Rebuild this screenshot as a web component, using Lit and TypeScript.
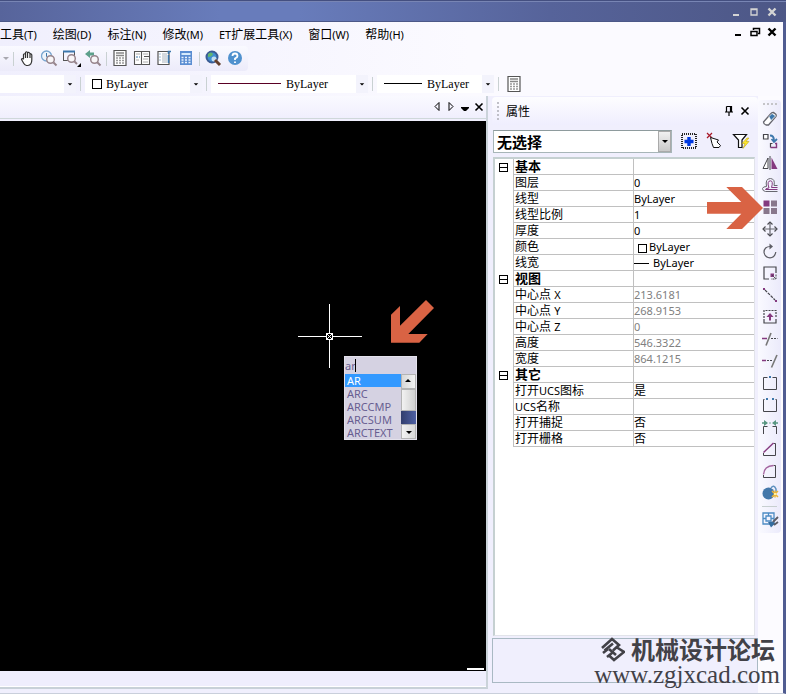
import { LitElement, html, svg, css } from "lit";
import { customElement } from "lit/decorators.js";

// Latin runs are set one pixel smaller than the Chinese text around them.
const mixed = (text: string) =>
  text
    .split(/([\x21-\x7e]+)/)
    .filter(Boolean)
    .map((part) => (/^[\x21-\x7e]/.test(part) ? html`<span class="latin">${part}</span>` : part));

const K = "#45454b";
const P = "#84397f";
const B = "#3c77ac";
const G = "#579681";

const icons: Record<string, unknown> = {
  hand: svg`<path d="M4.500 9V4.500q1-1.500 2 0V8M6.500 8V2.500q1-1.500 2 0V8M8.500 3q1-1.500 2.500.500V8M11 4q1.500-.500 1.800 1V10q0 5-4 5.500H7.500Q5.500 15 4.500 13L2.500 9.500Q3 7.500 4.500 9.500" fill="#fff" stroke="#333" stroke-width="1.200"/>`,
  zoomTime: svg`<circle cx="5.500" cy="6" r="5" fill="#eef4fb" stroke="#78a5cf" stroke-width="1.300"/><path d="M5.500 3v3.500L8 8" fill="none" stroke="${B}"/><circle cx="9.500" cy="9.500" r="3.800" fill="#f8f6f8" stroke="#97858c" stroke-width="1.500"/><path d="M12.500 12.500L15.500 15.500" stroke="#97858c" stroke-width="2"/>`,
  zoomWin: svg`<path d="M.5 11V2M0 10.500h5M11.500 2v4" fill="none" stroke="#555"/><path d="M0 1.500h12" stroke="${B}" stroke-width="2"/><circle cx="8.500" cy="8.500" r="3.800" fill="#f8f6f8" stroke="#97858c" stroke-width="1.500"/><path d="M11 11L14 14" stroke="#97858c" stroke-width="2"/><path d="M18 13v4h-4z" fill="#000"/>`,
  zoomPrev: svg`<path d="M0 4L5 0v2.500h4v3H5V8z" fill="#5da08b"/><circle cx="9.500" cy="9.500" r="3.800" fill="#f8f6f8" stroke="#97858c" stroke-width="1.500"/><path d="M12 12L15.500 15.500" stroke="#97858c" stroke-width="2"/>`,
  calc: svg`<path d="M2 .5h12v15H2z" fill="#fff" stroke="#555" stroke-width="1.200"/><path d="M4 3h8M4 5.500h8" stroke="#888" stroke-width="1.600"/><path d="M4 8h8M4 10.500h8M4 13h8" stroke="#999" stroke-width="1.400" stroke-dasharray="2 1"/>`,
  palettes: svg`<path d="M.5 1.500h15v13H.500zM7.500 1.500v13M10 6.500h5" fill="#fff" stroke="#555" stroke-width="1.100"/><path d="M2 4h4M9 4h5M2 10h3M9 9h5M9 12h5" stroke="#aaa"/><path d="M2 7h4" stroke="${B}" stroke-dasharray="2 1"/>`,
  sheet: svg`<path d="M2 1.500h11v13H2z" fill="#fff" stroke="#555" stroke-width="1.200"/><path d="M12.500 4V1.500H15M12.500 5v8" stroke="${B}" stroke-width="1.600" fill="none"/><path d="M3.500 4h1M3.500 7h1M3.500 10h1" stroke="${B}"/><path d="M6 4h5M6 6h5M6 8h5M6 10h5M6 12h5" stroke="#aab4be"/>`,
  blueCalc: svg`<path d="M2 1h12v14H2z" fill="#5b8ed2"/><path d="M3.500 3h9v2h-9z" fill="#d6ebfc"/><path d="M3.500 7.500h9M3.500 10h9M3.500 12.500h9" stroke="#eaf4ff" stroke-width="1.500" stroke-dasharray="2 1.500"/>`,
  globe: svg`<circle cx="7" cy="7" r="5.500" fill="#3f8fd0" stroke="#3b5b93" stroke-width="2"/><path d="M3 4q3-3 5 0q-1 3-5 3z" fill="#62b46f"/><circle cx="9" cy="9" r="2.500" fill="#c4def2"/><path d="M10 10l5 5" stroke="#633f2c" stroke-width="3"/>`,
  help: svg`<circle cx="8" cy="8" r="7" fill="#4f91ce"/><path d="M5.500 6q0-2.500 2.500-2.500T10.500 6Q10.500 7.500 8 8.500V10M8 11.500v1.500" fill="none" stroke="#fff" stroke-width="1.800"/>`,
  down: svg`<path d="M5 7h6L8 10z" fill="#000"/>`,
  eraser: svg`<path d="M1.500 11L9 2.500q1-1 2.500-1l2.500 2q.5 1 0 2L6.500 14H4q-2.500-1-2.500-3z" fill="#fff" stroke="#66666e" stroke-width="1.300"/><path d="M7 5.500L10 2.500l3.500 2.500L9 9.500z" fill="${B}" stroke="#fff" stroke-width=".600"/>`,
  copy: svg`<path d="M1.500 1.500h4.500v4.500H1.500z" fill="#fff" stroke="${K}" stroke-width="1.200"/><path d="M8 2.500q4 0 4 5M9.500 6l2.500 3 3-3" fill="none" stroke="${B}" stroke-width="1.800"/><path d="M10.500 10.500h-2v4" fill="none" stroke="${K}" stroke-width="1.200"/><path d="M8.500 14.500h6v-4h-1.500" fill="none" stroke="${P}" stroke-width="1.400"/>`,
  mirror: svg`<path d="M6 3v10.500H1z" fill="#fff" stroke="${K}"/><path d="M9.500 2.500V14H15.500z" fill="${P}"/><path d="M8 1v14" stroke="${K}"/>`,
  offset: svg`<path d="M15.500 14.500H3.500Q.5 14 .5 11.500Q1 9.500 4.500 9.500Q3 1.500 8.500 1.500Q13.500 2 12 8.500H15.500" fill="none" stroke="#66666e"/><path d="M15.500 12.500H3.500Q3 11.500 7 11Q4.500 4 8.500 3.800Q11.500 4 9.500 10.500H15.500" fill="none" stroke="${P}"/>`,
  array: svg`<path d="M1.500 1.500h6v6h-6z" fill="${P}"/><path d="M9 1.500h6v6H9zM1.500 9h6v6h-6zM9 9h6v6H9z" fill="#88778c"/>`,
  move: svg`<path d="M8 1.500v13M1.500 8h13" stroke="#66666e" stroke-width="1.200"/><path d="M5.500 3.500L8 1l2.500 2.500M5.500 12.500L8 15l2.500-2.500M3.500 5.500L1 8l2.500 2.500M12.500 5.500L15 8l-2.500 2.500" fill="none" stroke="#4b4b52" stroke-width="1.200"/>`,
  rotate: svg`<path d="M8.500 3.500Q2 3.500 2 9.500Q3 14.500 8 14.800Q13 14.500 13.800 9" fill="none" stroke="#5c5c64" stroke-width="1.200"/><path d="M7.500 .5L11 3.500L7.500 6.500z" fill="#5c5c64"/>`,
  scale: svg`<path d="M7 14H2V2h12v6" fill="none" stroke="${K}" stroke-width="1.200"/><path d="M8.500 8.500h3.500v3.500h-3.500z" fill="${P}"/><path d="M14 9.500v4.500h-5M10 10l4 4" fill="none" stroke="${K}" stroke-dasharray="2 1"/>`,
  stretch: svg`<path d="M3 3l10 10" stroke="${K}" stroke-width="1.200" stroke-dasharray="3 1"/><path d="M1 1h2v2H1zM13 13h2v2h-2z" fill="${P}"/>`,
  lengthen: svg`<path d="M2 10v4h12v-4" fill="none" stroke="${K}" stroke-width="1.200"/><path d="M2 9V1.500h12V9" fill="none" stroke="${K}" stroke-width="1.200" stroke-dasharray="2 1"/><path d="M8 4l3.500 4H9v3.500H7V8H4.500z" fill="${P}"/>`,
  trim: svg`<path d="M0 7.500h5" stroke="${P}" stroke-width="1.500"/><path d="M4 14.500L9 2" stroke="#777" stroke-width="1.600"/><path d="M9 7.500h6.500" stroke="${K}" stroke-dasharray="2 1"/>`,
  extend: svg`<path d="M0 7.500h4" stroke="${P}" stroke-width="1.500"/><path d="M5 7.500h5" stroke="${K}" stroke-dasharray="2 1"/><path d="M9.500 14.500L15 2" stroke="#777" stroke-width="1.600"/>`,
  breakPoint: svg`<path d="M5.500 2.500H1.500v12h13v-12h-4" fill="none" stroke="${K}"/><path d="M7 1h2v2H7z" fill="${B}"/>`,
  break: svg`<path d="M2.500 2.500H1.500v12h13v-12h-1" fill="none" stroke="${K}"/><path d="M4 1h2v2H4zM10 1h2v2h-2z" fill="${B}"/>`,
  join: svg`<path d="M1.500 15V7.500h4M14.500 15V7.500h-4" fill="none" stroke="${K}"/><path d="M0 4h3M16 4h-3M7.500 4h1" stroke="${G}" stroke-width="1.500"/><path d="M2 1l4 3-4 3zM14 1l-4 3 4 3z" fill="${G}"/>`,
  chamfer: svg`<path d="M1.500 12v2.500h12V2.500h-2" fill="none" stroke="${K}"/><path d="M1.500 11.500L11.500 2" stroke="${P}" stroke-width="1.400"/>`,
  fillet: svg`<path d="M1.500 12v2.500h12V2.500h-2" fill="none" stroke="${K}"/><path d="M1.500 11.500Q2 3 11.500 2.500" fill="none" stroke="#a565a0" stroke-width="1.300"/>`,
  explode: svg`<circle cx="6.500" cy="8.500" r="6" fill="#4377a9"/><path d="M9 3q3-4 5 1v3" fill="none" stroke="#5f91c0" stroke-width="1.500"/><path d="M10 6l6 6M16 6l-6 6M13 5.500v7" stroke="#efb532" stroke-width="1.500"/><path d="M12 8h2v2h-2z" fill="#fff3a0"/>`,
  paint: svg`<path d="M1 1h11v11H1zM1 6.500h3M9 6.500h3M6.500 1v3M4 4h5v5H4z" fill="none" stroke="#4c8bc4" stroke-width="1.300"/><path d="M6 10l3 5.500 4-4-2-2z" fill="#346c9f"/><path d="M11 10l5-5M12 13l4-3" stroke="#5c5c66" stroke-width="1.800"/>`,
  quickAdd: svg`<path d="M1 1h14v14H1z" fill="none" stroke="#222" stroke-width="2" stroke-dasharray="1 1"/><path d="M8 4v9M3.500 8.500h9" stroke="#0038e0" stroke-width="3.400"/>`,
  pick: svg`<path d="M0 0l5 5M5 0L0 5" stroke="#a81828" stroke-width="1.200"/><path d="M3.500 4.500l8 2.500-1.500 2 3.500 3.500-1.500 2H6.500L5 10.500z" fill="#fff" stroke="#111"/>`,
  filter: svg`<path d="M.5 1.500h13L9 7v7.500H5.500V7z" fill="#fff" stroke="#111" stroke-width="1.200"/><path d="M14 5l-5 5.500h3l-2 5 6-7h-3L16 5z" fill="#ffe82b" stroke="#b49a11" stroke-width=".500"/>`,
  tabPrev: svg`<path d="M10 3.500v8L6 7.500z" fill="none" stroke="#000"/>`,
  tabNext: svg`<path d="M6 3.500v8l4-4z" fill="none" stroke="#000"/>`,
  tabList: svg`<path d="M4 8h8v1l-3 3H7L4 9z" fill="#000"/>`,
  close: svg`<path d="M4.500 4.500l7 7M11.500 4.500l-7 7" stroke="#000" stroke-width="1.600"/>`,
  boldClose: svg`<path d="M4.500 4.500l7 7M11.500 4.500l-7 7" stroke="currentColor" stroke-width="2.400"/>`,
  minimize: svg`<path d="M5 11h6" stroke="currentColor" stroke-width="2"/>`,
  maximize: svg`<path d="M5 5h6v6H5zM5 5.500h6" fill="none" stroke="currentColor" stroke-width="1.300"/>`,
  restore: svg`<path d="M6.500 6V4.500h6v5H11M4 7.500h6v4H4zM4 7.500h6" fill="none" stroke="currentColor" stroke-width="1.500"/>`,
  pin: svg`<path d="M5.500 3.500h5v5M5.500 3.500v5M9.500 3.500v5M4 9h8M8 9v4" fill="none" stroke="#000" stroke-width="1.200"/>`,
};

const icon = (name: string) => html`<svg viewBox="0 0 16 16" aria-hidden="true">${icons[name]}</svg>`;
const button = (name: string, label: string, kind = "tool") =>
  html`<button class=${kind} aria-label=${label}>${icon(name)}</button>`;

const menus = ["工具(T)", "绘图(D)", "标注(N)", "修改(M)", "ET扩展工具(X)", "窗口(W)", "帮助(H)"];

const standardTools = [
  [["hand", "平移"], ["zoomTime", "实时缩放"], ["zoomWin", "窗口缩放"], ["zoomPrev", "上一视图"]],
  [["calc", "特性"], ["palettes", "工具选项板"], ["sheet", "设计中心"], ["blueCalc", "计算器"]],
  [["globe", "查找"], ["help", "帮助"]],
];

const modifyTools = [
  ["eraser", "删除"], ["copy", "复制"], ["mirror", "镜像"], ["offset", "偏移"], ["array", "阵列"],
  ["move", "移动"], ["rotate", "旋转"], ["scale", "缩放"], ["stretch", "拉伸"], ["lengthen", "拉长"],
  ["trim", "修剪"], ["extend", "延伸"], ["breakPoint", "打断于点"], ["break", "打断"], ["join", "合并"],
  ["chamfer", "倒角"], ["fillet", "圆角"], ["explode", "分解"],
];

type Row = { name: string; value?: string; mark?: "swatch" | "stroke"; muted?: boolean };
const groups: { title: string; rows: Row[] }[] = [
  {
    title: "基本",
    rows: [
      { name: "图层", value: "0" },
      { name: "线型", value: "ByLayer" },
      { name: "线型比例", value: "1" },
      { name: "厚度", value: "0" },
      { name: "颜色", value: "ByLayer", mark: "swatch" },
      { name: "线宽", value: "ByLayer", mark: "stroke" },
    ],
  },
  {
    title: "视图",
    rows: [
      { name: "中心点 X", value: "213.6181", muted: true },
      { name: "中心点 Y", value: "268.9153", muted: true },
      { name: "中心点 Z", value: "0", muted: true },
      { name: "高度", value: "546.3322", muted: true },
      { name: "宽度", value: "864.1215", muted: true },
    ],
  },
  {
    title: "其它",
    rows: [
      { name: "打开UCS图标", value: "是" },
      { name: "UCS名称" },
      { name: "打开捕捉", value: "否" },
      { name: "打开栅格", value: "否" },
    ],
  },
];

const base = css`
  * { box-sizing: border-box; }
  button { padding: 0; border: 0; background: none; color: inherit; font: inherit; display: flex; align-items: center; justify-content: center; flex: none; }
  button svg { width: 16px; height: 16px; overflow: visible; flex: none; }
  .latin { font-size: 11px; }
  select { appearance: none; border: 0; padding: 0; margin: 0; background: none; color: #000; min-width: 0; flex: 1; outline: 0; }
`;

@customElement("property-panel")
export class PropertyPanel extends LitElement {
  static styles = [
    base,
    css`
      :host { display: flex; flex-direction: column; flex: none; width: 266px; padding-bottom: 10px; }
      .head { display: flex; align-items: center; height: 28px; padding: 0 5px; border-radius: 4px 4px 0 0; background: linear-gradient(#fdfdff, #efeefe); flex: none; }
      .grip { width: 2px; height: 18px; margin-right: 7px; background: repeating-linear-gradient(#c0c0c8 0 2px, transparent 2px 4px); }
      h2 { flex: 1; margin: 0; font-size: 12px; font-weight: 400; }
      .small { width: 16px; height: 20px; }
      .picker { display: flex; align-items: center; height: 32px; padding-left: 1px; flex: none; }
      .combo { display: flex; width: 179px; height: 23px; border: 1px solid #a7b5b8; border-top-color: #8e9b9d; background: #fff; margin-right: 4px; }
      .combo select { font: bold 15px "Noto Sans CJK SC", sans-serif; padding-left: 3px; }
      .arrow { width: 13px; background: linear-gradient(#f1f1f1, #c9c9c9); border: 1px solid #aaa; display: flex; align-items: center; justify-content: center; }
      .arrow svg { width: 16px; height: 16px; flex: none; }
      .picker button { width: 26px; height: 22px; }
      .grid { flex: 1; margin: 0 3px 0 1px; border: 1px solid #e2e4ea; border-top: 2px solid #c5d0d1; border-left: 2px solid #c5d0d1; background: #fff; }
      table { width: 100%; table-layout: fixed; border-spacing: 0; }
      tr { height: 16px; }
      td, th { padding: 0; height: 16px; line-height: 15px; text-align: left; font-weight: 400; white-space: nowrap; border-bottom: 1px solid #c0c0c0; }
      .gutter { width: 19px; border-bottom: 0; border-right: 1px solid #c0c0c0; }
      .name { width: 120px; padding-left: 1px; border-right: 1px solid #c0c0c0; }
      .title { font-weight: 700; font-size: 13px; }
      .muted { color: #808080; }
      .toggle { width: 9px; height: 9px; margin-left: 4px; border: 1px solid #000; }
      .toggle::before { content: ""; width: 7px; height: 1px; background: #000; }
      .swatch { display: inline-block; width: 9px; height: 9px; margin: 0 2px 0 4px; border: 1px solid #000; vertical-align: -2px; }
      .stroke { display: inline-block; width: 15px; height: 1px; margin: 0 4px 0 0; background: #000; vertical-align: 3px; }
      .about { height: 45px; margin-top: 2px; border: 1px solid #a9b9c3; flex: none; }
    `,
  ];

  render() {
    return html`
      <div class="head">
        <span class="grip"></span>
        <h2>属性</h2>
        ${button("pin", "自动隐藏", "small")}${button("close", "关闭", "small")}
      </div>
      <div class="picker">
        <div class="combo">
          <select aria-label="选择对象"><option>无选择</option></select>
          <span class="arrow">${icon("down")}</span>
        </div>
        ${button("quickAdd", "添加选择")}${button("pick", "选择对象")}${button("filter", "快速选择")}
      </div>
      <div class="grid">
        <table>
          ${groups.map(
            (g) => html`<tbody>
              <tr>
                <td class="gutter"><button class="toggle" aria-label="折叠"></button></td>
                <th class="name title">${g.title}</th>
                <td></td>
              </tr>
              ${g.rows.map(
                (r) => html`<tr>
                  <td class="gutter"></td>
                  <th class="name">${mixed(r.name)}</th>
                  <td class=${r.muted ? "muted" : ""}>${r.mark ? html`<span class=${r.mark}></span>` : ""}${mixed(r.value ?? "")}</td>
                </tr>`
              )}
            </tbody>`
          )}
        </table>
      </div>
      <div class="about"></div>
    `;
  }
}

@customElement("drawing-view")
export class DrawingView extends LitElement {
  static styles = [
    base,
    css`
      :host { display: flex; flex-direction: column; flex: 1; min-width: 0; margin-bottom: 4px; border-right: 2px solid #cbd3da; border-bottom: 2px solid #c8d1d8; }
      .tabs { display: flex; justify-content: flex-end; align-items: center; height: 23px; border-bottom: 1px solid #cfd8da; background: linear-gradient(#fafaff, #f0effd); flex: none; }
      .tabs button { width: 14px; height: 22px; }
      .canvas { position: relative; flex: 1; background: #000; margin-top: 2px; overflow: hidden; }
      .foot { height: 16px; background: #efeefd; border-bottom: 1px solid #fff; flex: none; }
      .cross { position: absolute; left: 298px; top: 183px; width: 64px; height: 64px; }
      .pointer { position: absolute; left: 390px; top: 178px; width: 46px; height: 46px; }
      .edge { position: absolute; right: 2px; bottom: 1px; width: 17px; height: 2px; background: #fff; }
      .command { position: absolute; left: 344px; top: 235px; width: 73px; background: #d5d2e2; border: 1px solid #e4e2ec; font-size: 11px; color: #685e91; }
      .entry { display: flex; align-items: center; height: 17px; }
      .entry input { width: 10px; height: 15px; padding: 0; border: 0; background: none; color: inherit; font: inherit; outline: 0; }
      .caret { width: 1px; height: 13px; background: #000; }
      .choices { display: flex; }
      ul { flex: 1; min-width: 0; margin: 0; padding: 0; list-style: none; }
      li { height: 13px; line-height: 13px; padding-left: 2px; }
      .chosen { background: #3399ff; color: #fff; }
      .bar { display: flex; flex-direction: column; width: 15px; background: linear-gradient(90deg, #323e6d, #4e60a3); }
      .bar button { height: 15px; background: linear-gradient(90deg, #f2f2f2, #d8d8d8); border: 1px solid #b4b4b4; }
      .thumb { height: 22px; background: linear-gradient(90deg, #f2f2f2, #d0d0d0); border: 1px solid #b4b4b4; }
      .space { flex: 1; }
      .up { transform: rotate(180deg); }
    `,
  ];

  render() {
    const commands = ["AR", "ARC", "ARCCMP", "ARCSUM", "ARCTEXT"];
    return html`
      <div class="tabs">
        ${button("tabPrev", "上一个")}${button("tabNext", "下一个")}${button("tabList", "列表")}${button("close", "关闭")}
      </div>
      <div class="canvas">
        <svg class="cross" viewBox="0 0 64 64" shape-rendering="crispEdges">
          <path d="M0 32.500h64M31.500 0v64" stroke="#fff" />
          <path d="M28.500 29.500h6v6h-6z" fill="#000" stroke="#fff" />
          <path d="M29 30l5 5M34 30l-5 5" stroke="#fff" />
        </svg>
        <svg class="pointer" viewBox="100 9 46 46">
          <path d="M101 52.700V24.700L110 16V35.700L136 10L144 18L118.300 44H137.700L129.300 52.700z" fill="#d96344" />
        </svg>
        <div class="command">
          <div class="entry"><input aria-label="命令" .value=${"ar"} /><span class="caret"></span></div>
          <div class="choices">
            <ul role="listbox">
              ${commands.map((c, i) => html`<li role="option" class=${i === 0 ? "chosen" : ""}>${c}</li>`)}
            </ul>
            <div class="bar">
              <button class="up" aria-label="向上">${icon("down")}</button>
              <span class="thumb"></span>
              <span class="space"></span>
              <button aria-label="向下">${icon("down")}</button>
            </div>
          </div>
        </div>
        <span class="edge"></span>
      </div>
      <div class="foot"></div>
    `;
  }
}

@customElement("app-root")
export class AppRoot extends LitElement {
  static styles = [
    base,
    css`
      :host { display: flex; flex-direction: column; position: relative; min-height: 100vh; overflow: hidden; background: #f0effd; color: #000; font: 12px "Noto Sans", "Noto Sans CJK SC", sans-serif; }
      .caption { display: flex; justify-content: flex-end; align-items: center; height: 22px; padding-right: 5px; border-top: 1px solid #444f80; box-shadow: inset 0 1px #7885b4, inset 0 -1px #4c5888; background: linear-gradient(90deg, #57649b, #687cbb 28%, #687cbb 38%, #56639a 70%, #4d5786); color: #d4d4d4; flex: none; }
      .caption button { width: 18px; height: 20px; }
      .frame { flex: 1; display: flex; flex-direction: column; border-right: 3px solid #505c91; border-bottom: 1px solid #c9cfdb; background: linear-gradient(90deg, #f0effd, #fbfaff 60%); }
      .menu { display: flex; align-items: center; height: 24px; gap: 16px; flex: none; }
      .menu a { color: #000; text-decoration: none; white-space: nowrap; }
      .mdi { display: flex; margin-left: auto; padding: 0 3px 4px 0; }
      .mdi button { width: 17px; height: 16px; }
      .standard { display: flex; align-items: center; align-self: flex-start; height: 25px; padding-right: 2px; border-radius: 0 4px 4px 0; background: linear-gradient(#fafaff, #ecebfa); flex: none; }
      .standard svg { margin-bottom: 2px; }
      .tool { width: 22px; height: 22px; }
      .split { width: 1px; height: 14px; margin: 0 2px; background: #c9d1d2; flex: none; }
      .more { width: 11px; height: 22px; opacity: .3; }
      .format { display: flex; align-items: center; height: 25px; flex: none; }
      .format .split { margin: 0 4px; }
      .combo { display: flex; align-items: center; width: 117px; height: 18px; padding-left: 7px; background: #fff; flex: none; }
      .combo select { font: 12px "Liberation Serif", serif; font-weight: 400; }
      .combo svg { width: 12px; height: 18px; background: #f3f3fc; flex: none; }
      .combo svg { overflow: visible; }
      .first { width: 76px; }
      .long { width: 157px; }
      .swatch { width: 10px; height: 10px; border: 1px solid #000; margin-right: 4px; flex: none; }
      .line { width: 63px; height: 1px; background: #5a0024; margin-right: 5px; flex: none; }
      .short { width: 38px; background: #000; }
      .work { display: flex; flex: 1; background: #f0effd; }
      .panelbox { display: flex; padding: 1px 0 0 4px; }
      .side { width: 25px; background: #fcfbff; flex: none; }
      .modify { display: flex; flex-direction: column; align-items: center; margin: 4px 2px 0 0; padding: 3px 0 2px; border-radius: 4px; background: linear-gradient(90deg, #fafaff, #ebeafb); }
      .dots { width: 14px; height: 2px; margin-bottom: 3px; background: repeating-linear-gradient(90deg, #c4c4c8 0 2px, transparent 2px 4px); }
      .rule { width: 15px; height: 1px; margin: 2px 0; background: #c7cfd0; }
      .arrow { position: absolute; right: 22px; top: 186px; width: 58px; height: 44px; }
      .mark { position: absolute; right: 6px; bottom: 6px; color: #424147; display: flex; flex-direction: column; align-items: flex-end; }
      .brand { display: flex; align-items: center; height: 26px; gap: 6px; padding-right: 5px; font: bold 24px/24px "Noto Sans CJK SC", sans-serif; }
      .brand svg { width: 25px; height: 25px; }
      .site { font: 25px/26px "Liberation Serif", serif; }
    `,
  ];

  render() {
    const split = html`<span class="split"></span>`;
    return html`
      <header class="caption">
        ${button("minimize", "最小化")}${button("maximize", "最大化")}${button("boldClose", "关闭")}
      </header>
      <div class="frame">
        <nav class="menu">
          ${menus.map((m) => html`<a href="#">${mixed(m)}</a>`)}
          <div class="mdi">${button("minimize", "最小化")}${button("restore", "还原")}${button("boldClose", "关闭")}</div>
        </nav>
        <div class="standard">
          ${button("down", "更多", "more")}
          ${standardTools.map((set) => html`${split}${set.map(([n, l]) => button(n, l))}`)}
        </div>
        <div class="format">
          <div class="combo first"><select aria-label="图层"><option></option></select>${icon("down")}</div>
          ${split}
          <div class="combo"><span class="swatch"></span><select aria-label="颜色"><option>ByLayer</option></select>${icon("down")}</div>
          ${split}
          <div class="combo long"><span class="line"></span><select aria-label="线型"><option>ByLayer</option></select>${icon("down")}</div>
          ${split}
          <div class="combo"><span class="line short"></span><select aria-label="线宽"><option>ByLayer</option></select>${icon("down")}</div>
          ${split} ${button("calc", "特性")}
        </div>
        <div class="work">
          <drawing-view></drawing-view>
          <div class="panelbox"><property-panel></property-panel></div>
          <aside class="side">
            <div class="modify">
              <span class="dots"></span>
              ${modifyTools.map(([n, l]) => button(n, l))}
              <span class="rule"></span>
              ${button("paint", "格式刷")}
            </div>
          </aside>
        </div>
      </div>
      <svg class="arrow" viewBox="70 91 58 44" aria-hidden="true">
        <path d="M71 107H105.300L90.300 92H106L127 113L106 134H90.300L105.300 118.700H71z" fill="#d96344" />
      </svg>
      <div class="mark">
        <div class="brand">
          <svg viewBox="0 0 25 25" fill="none" stroke="#424147" stroke-width="2.600" aria-hidden="true">
            <path d="M2 11L12 2L19 8L13 13.500M4.500 13.500L13 6.500M9 12L16 18M17 10.500L24 15L14 23L9 18.500M3 16L8 12M12 16L7 20" />
          </svg>
          <span>机械设计论坛</span>
        </div>
        <div class="site">www.zgjxcad.com</div>
      </div>
    `;
  }
}
